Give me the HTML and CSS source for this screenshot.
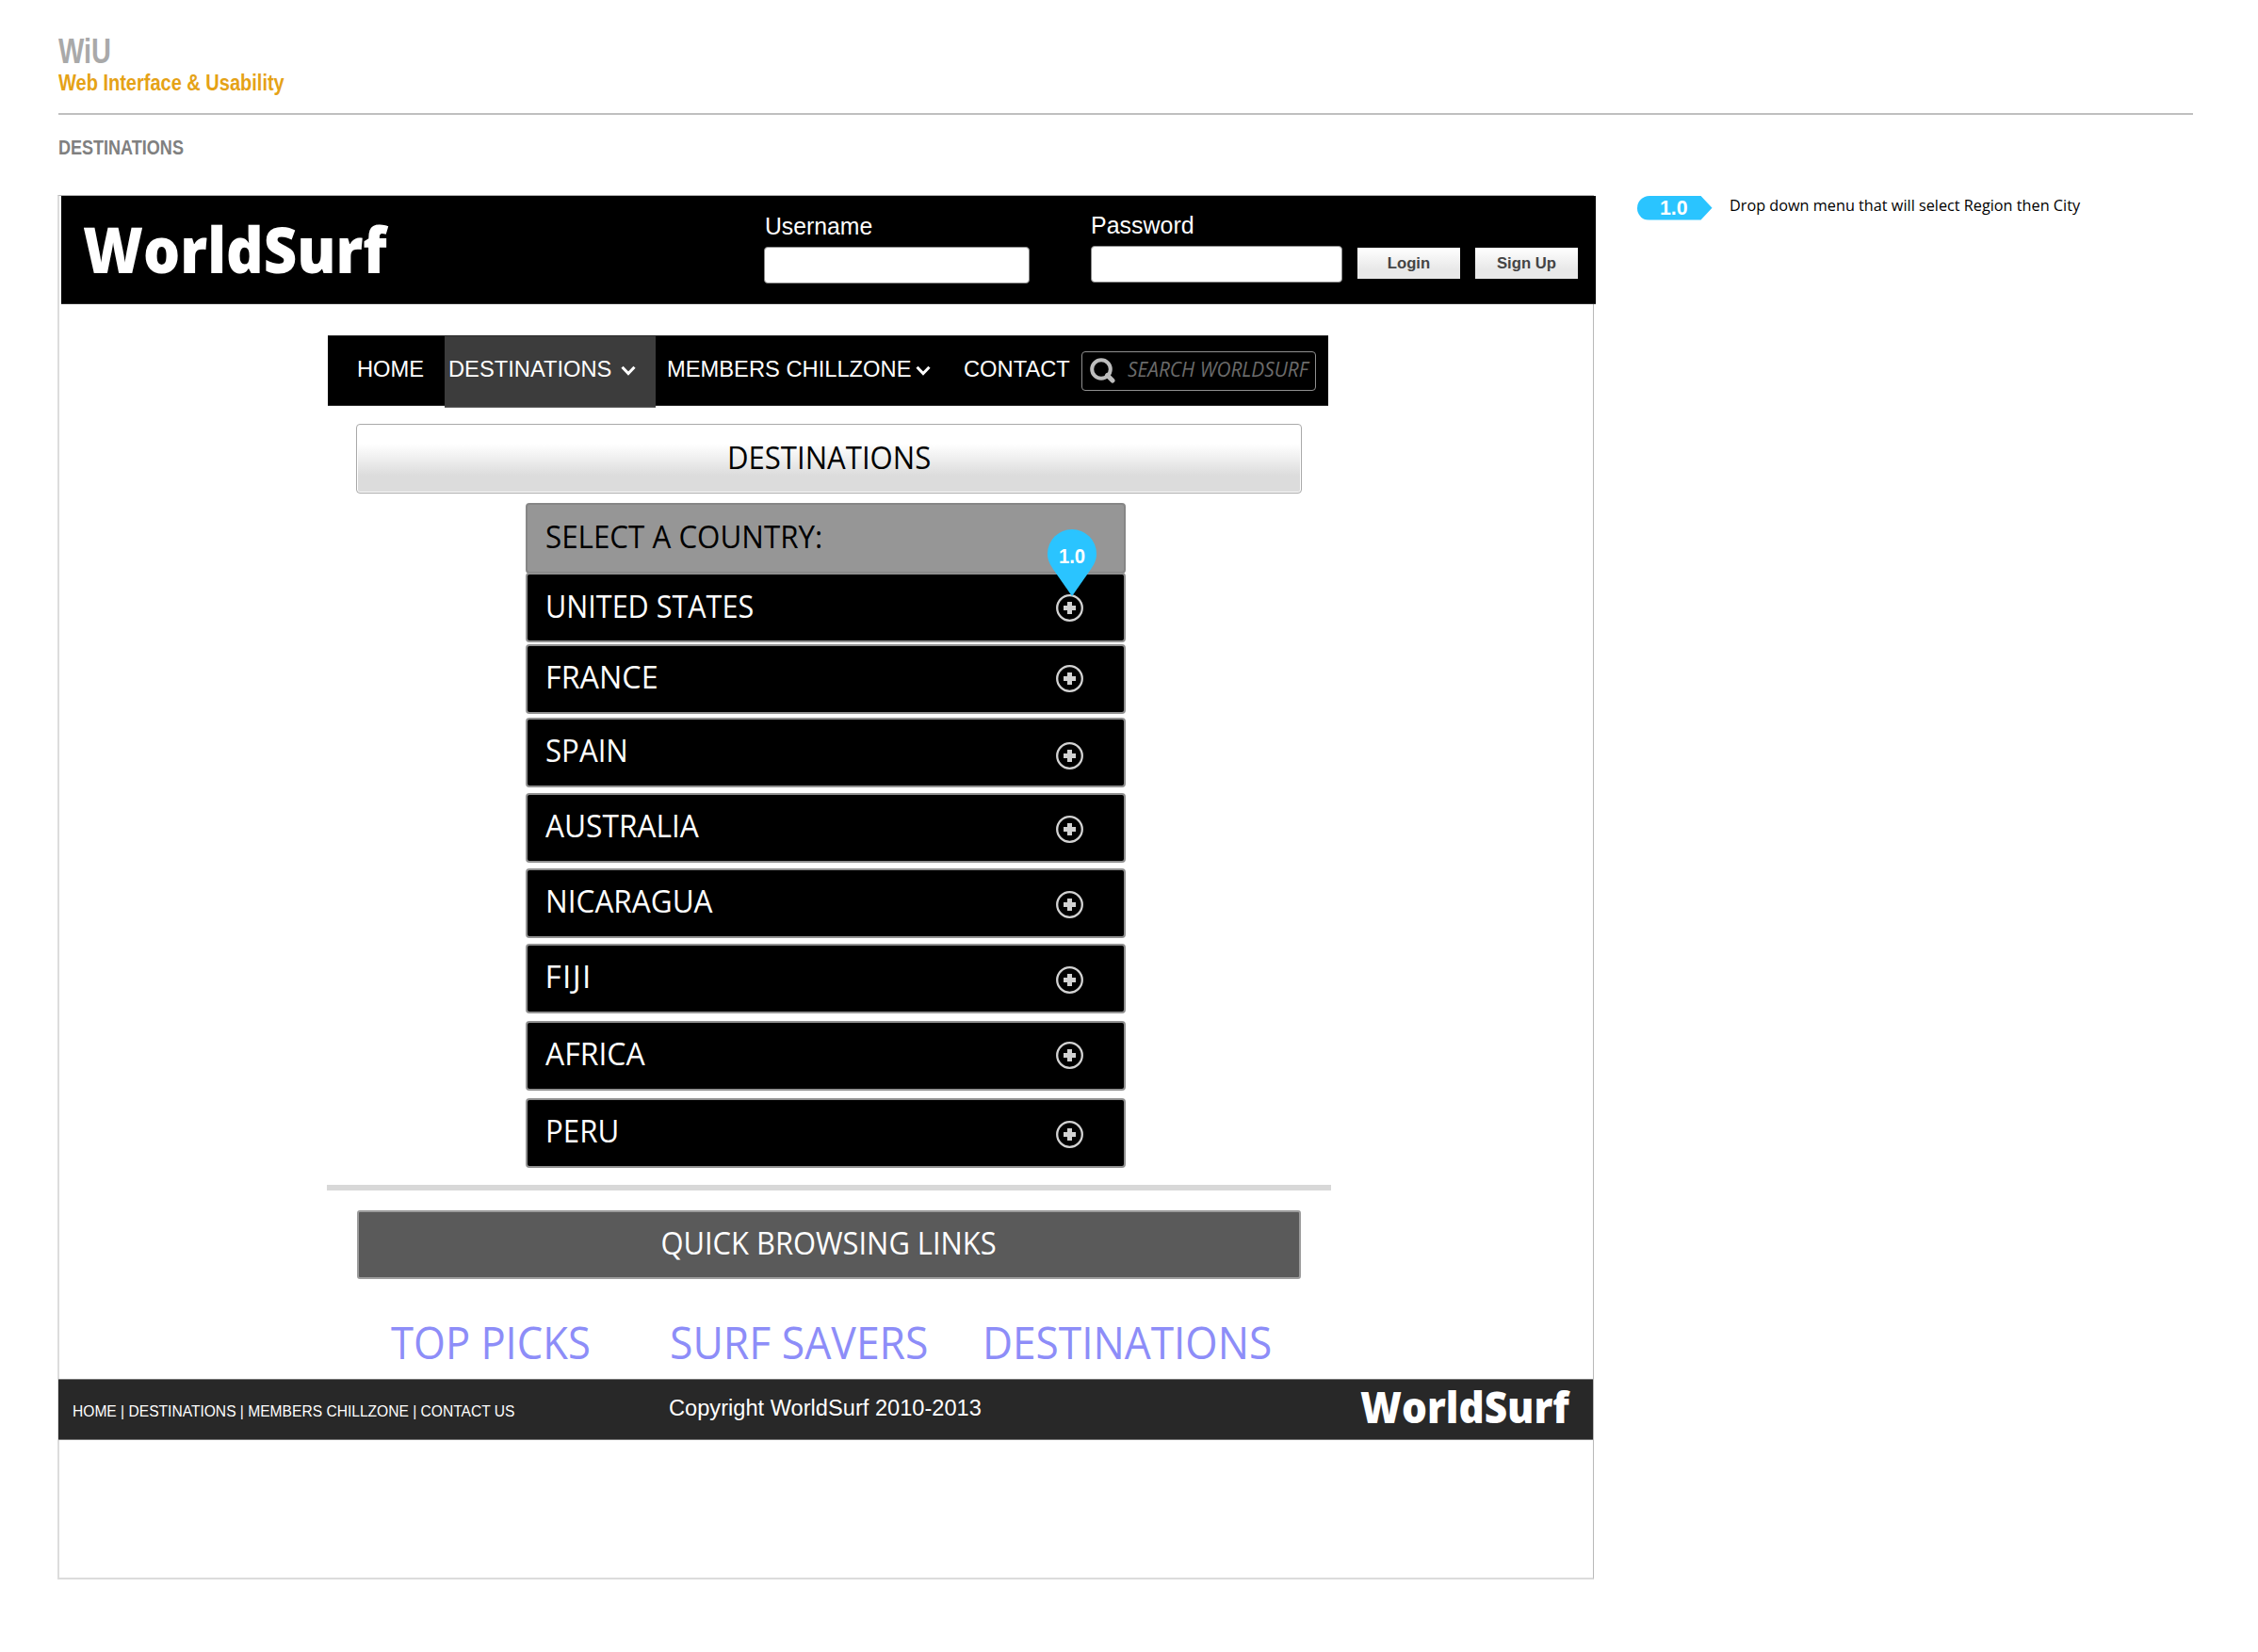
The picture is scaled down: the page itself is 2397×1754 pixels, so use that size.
FILE: index.html
```html
<!DOCTYPE html>
<html lang="en">
<head>
<meta charset="utf-8">
<title>WiU - Destinations</title>
<link rel="stylesheet" href="styles.css">
</head>
<body>
<svg width="0" height="0" class="defs">
  <symbol id="plus" viewBox="0 0 29 29">
    <circle cx="14.5" cy="14.5" r="13.3" fill="none" stroke="#d2d2d2" stroke-width="2.3"/>
    <path d="M12 8h5v4h4v5h-4v4h-5v-4h-4v-5h4z" fill="#d2d2d2"/>
  </symbol>
  <symbol id="chevron" viewBox="0 0 16 11">
    <path d="M1.5 1.8 8 8.6l6.500-6.800" fill="none" stroke="#fff" stroke-width="3"/>
  </symbol>
</svg>

<header class="doc-head">
  <div class="doc-brand"><span class="t">WiU</span></div>
  <div class="doc-sub"><span class="t">Web Interface &amp; Usability</span></div>
</header>
<div class="doc-title"><span class="t">DESTINATIONS</span></div>

<div class="board">
  <main class="frame">
    <div class="topbar">
      <div class="logo"><span class="t">WorldSurf</span></div>
      <label class="field user"><span class="t">Username</span><span class="input"></span></label>
      <label class="field pass"><span class="t">Password</span><span class="input"></span></label>
      <div class="buttons">
        <span class="btn">Login</span>
        <span class="btn">Sign Up</span>
      </div>
    </div>

    <nav class="nav">
      <a class="item home"><span class="t">HOME</span></a>
      <a class="item active"><span class="t">DESTINATIONS</span><svg class="chev"><use href="#chevron"/></svg></a>
      <a class="item members"><span class="t">MEMBERS CHILLZONE</span><svg class="chev"><use href="#chevron"/></svg></a>
      <a class="item contact"><span class="t">CONTACT</span></a>
      <div class="search">
        <svg class="glass" viewBox="0 0 27 27"><circle cx="12" cy="12" r="9.800" fill="none" stroke="#bdbdbd" stroke-width="4"/><path d="M18.500 18.500 24 24" stroke="#bdbdbd" stroke-width="5" stroke-linecap="round"/></svg>
        <span class="t">SEARCH WORLDSURF</span>
      </div>
    </nav>

    <h1 class="title"><span class="t">DESTINATIONS</span></h1>

    <div class="accordion">
      <div class="row select"><span class="t">SELECT A COUNTRY:</span></div>
      <div class="row us"><span class="t">UNITED STATES</span><svg class="plus"><use href="#plus"/></svg></div>
      <div class="row france"><span class="t">FRANCE</span><svg class="plus"><use href="#plus"/></svg></div>
      <div class="row spain"><span class="t">SPAIN</span><svg class="plus"><use href="#plus"/></svg></div>
      <div class="row australia"><span class="t">AUSTRALIA</span><svg class="plus"><use href="#plus"/></svg></div>
      <div class="row nicaragua"><span class="t">NICARAGUA</span><svg class="plus"><use href="#plus"/></svg></div>
      <div class="row fiji"><span class="t">FIJI</span><svg class="plus"><use href="#plus"/></svg></div>
      <div class="row africa"><span class="t">AFRICA</span><svg class="plus"><use href="#plus"/></svg></div>
      <div class="row peru"><span class="t">PERU</span><svg class="plus"><use href="#plus"/></svg></div>
      <div class="pin">
        <svg viewBox="0 0 52 71"><path d="M26 71 7.500 44.500C3 38 0 33 0 26a26 26 0 0 1 52 0c0 7-3 12-7.500 18.500z" fill="#2ac4ff"/></svg>
        <span class="pin-label">1.0</span>
      </div>
    </div>

    <div class="divider"></div>
    <div class="quick"><span class="t">QUICK BROWSING LINKS</span></div>
    <div class="links">
      <a class="t picks">TOP PICKS</a>
      <a class="t savers">SURF SAVERS</a>
      <a class="t dests">DESTINATIONS</a>
    </div>

    <footer class="footer">
      <div class="foot-nav"><span class="t">HOME | DESTINATIONS | MEMBERS CHILLZONE | CONTACT US</span></div>
      <div class="copy"><span class="t">Copyright WorldSurf 2010-2013</span></div>
      <div class="foot-logo"><span class="t">WorldSurf</span></div>
    </footer>
  </main>

  <aside class="notes">
    <span class="tag">1.0</span>
    <span class="note"><span class="t">Drop down menu that will select Region then City</span></span>
  </aside>
</div>
</body>
</html>
```
FILE: styles.css
```css
* { box-sizing: border-box; }
body {
  margin: 0;
  width: 2397px;
  height: 1754px;
  background: #fff;
  font-family: "Liberation Sans", Arial, sans-serif;
  overflow: hidden;
}
.defs { display: block; }

/* Labels are set slightly condensed; --sx is the horizontal scale */
.t {
  display: inline-block;
  white-space: nowrap;
  transform: scaleX(var(--sx, 1));
  transform-origin: 0 50%;
}

/* Document heading */
.doc-head {
  margin-left: 61.5px;
  width: 2266.500px;
  height: 122px;
  padding-top: 41px;
  border-bottom: 2px solid #bfbfbf;
  font-weight: bold;
}
.doc-brand { --sx: .781; font-size: 37px; line-height: 28px; height: 28px; color: #a9a9a9; }
.doc-sub { --sx: .827; font-size: 24.2px; line-height: 38px; height: 38px; color: #e5a216; }
.doc-title {
  --sx: .791;
  margin-left: 61.5px;
  height: 85px;
  line-height: 69px;
  font-size: 22.8px;
  font-weight: bold;
  color: #808080;
}

.board { display: flex; align-items: flex-start; }
.frame {
  margin-left: 61px;
  width: 1631px;
  height: 1470px;
  border: solid #dcdcdc;
  border-width: 1px 1px 2px 2px;
  border-top-color: #b4b4b4;
  border-right-color: #b9b9b9;
}

/* Top bar */
.topbar {
  display: flex;
  margin-left: 1.500px;
  width: 1629px;
  height: 115px;
  padding-left: 23.500px;
  background: #000;
  border-bottom: 1px solid #2b2b2b;
  color: #fff;
}
.logo {
  --sx: .922;
  width: 723px;
  font: 800 66.8px/114px "Open Sans", sans-serif;
}
.field { font-size: 25.6px; line-height: 28px; }
.field .t { display: block; margin-bottom: 8px; }
.input {
  display: block;
  height: 39px;
  background: #fff;
  border: 1px solid #8a8a8a;
  border-radius: 4px;
}
.user { width: 282px; padding-top: 18px; }
.user .t { --sx: .968; padding-left: 1px; }
.pass { width: 267.500px; margin-left: 64.500px; padding-top: 17px; }
.pass .t { --sx: .975; }
.buttons { display: flex; gap: 16px; margin: 55px 0 0 16px; }
.btn {
  width: 109px;
  height: 33px;
  background: linear-gradient(#fff, #e8e8e8 70%);
  color: #444;
  font-size: 16.7px;
  font-weight: bold;
  line-height: 33px;
  text-align: center;
}

/* Navigation */
.nav {
  display: flex;
  margin: 33px 0 0 285px;
  width: 1062px;
  height: 75px;
  background: #000;
  border: 1px solid #2b2b2b;
  border-width: 1px 0;
  color: #fff;
}
.item { --sx: .98; display: flex; height: 73px; font-size: 24.2px; line-height: 70px; }
.home { width: 124px; padding-left: 31px; }
.active {
  width: 224px;
  height: 76px;
  padding-left: 4px;
  background: #3c3c3c;
  border-bottom: 1px solid #6a6a6a;
}
.active .t { width: 183px; }
.members { padding-left: 12px; }
.members .t { width: 263.500px; }
.contact { width: 160.500px; padding-left: 35px; }
.chev { width: 16px; height: 11px; margin-top: 31px; }
.search {
  --sx: .934;
  display: flex;
  width: 249px;
  height: 42px;
  margin-top: 16px;
  padding-left: 8px;
  border: 1px solid #8f8f8f;
  border-radius: 4px;
  color: #6b6b6b;
  font: italic 22.3px/35px "Open Sans", sans-serif;
}
.glass { flex: none; width: 27px; height: 27px; margin: 6px 13px 0 0; }

/* Page title */
.title {
  --sx: .932;
  margin: 19px 0 0 315px;
  width: 1004px;
  height: 74px;
  border: 1px solid #a9a9a9;
  border-radius: 4px;
  box-shadow: inset 0 0 0 1px #fff;
  background: linear-gradient(#fff 28%, #dcdcdc 75%);
  font: 33.4px/68px "Open Sans", sans-serif;
  text-align: center;
}
.title .t, .quick .t { transform-origin: 50% 50%; }

/* Country accordion */
.accordion {
  position: relative;
  margin: 10px 0 0 495px;
  width: 637px;
}
.row {
  display: flex;
  justify-content: space-between;
  height: 74px;
  padding: 0 43px 0 18.500px;
  background: #000;
  border: 2px solid #919191;
  border-radius: 4px;
  color: #fff;
  font: 33.4px/64px "Open Sans", sans-serif;
}
.plus { width: 29px; height: 29px; margin-top: 21.500px; }
.select { --sx: .938; height: 75px; background: #969696; border-color: #868686; color: #000; line-height: 66px; }
.us { --sx: .915; margin-top: -1px; line-height: 66px; }
.us .plus { margin-top: 20.500px; }
.france { --sx: .967; margin-top: 2px; line-height: 65px; }
.france .plus { margin-top: 20px; }
.spain { --sx: .935; margin-top: 4px; line-height: 65px; }
.spain .plus { margin-top: 24px; }
.australia { --sx: .948; margin-top: 6px; line-height: 65px; }
.nicaragua { --sx: .944; margin-top: 6px; line-height: 65px; }
.fiji { letter-spacing: 1.3px; margin-top: 6px; line-height: 65px; }
.africa { --sx: .957; margin-top: 8px; line-height: 65px; }
.africa .plus { margin-top: 20px; }
.peru { --sx: .935; margin-top: 8px; line-height: 65px; }
.pin { position: absolute; left: 554px; top: 28px; width: 52px; height: 71px; }
.pin svg { display: block; width: 52px; height: 71px; }
.pin-label {
  position: absolute;
  inset: 0 0 auto 0;
  color: #fff;
  font-size: 22.5px;
  font-weight: bold;
  line-height: 58px;
  text-align: center;
  transform: scaleX(.9);
}

/* Quick links */
.divider { margin: 18px 0 0 283.500px; width: 1066.500px; height: 6px; background: #d8d8d8; }
.quick {
  --sx: .925;
  margin: 21px 0 0 316px;
  width: 1002px;
  height: 73px;
  background: #5a5a5a;
  border: 2px solid #9c9c9c;
  border-radius: 3px;
  color: #fff;
  font: 33.4px/65px "Open Sans", sans-serif;
  text-align: center;
}
.links {
  display: grid;
  grid-template-columns: 296px 331.500px 310px;
  margin-left: 352px;
  height: 106px;
  padding-top: 28px;
  color: #8d8df8;
  font: 46.6px/79px "Open Sans", sans-serif;
}
.picks { --sx: .935; }
.savers { --sx: .955; }
.dests { --sx: .948; }

/* Footer */
.footer {
  display: flex;
  margin-left: -1.500px;
  width: 1629px;
  height: 65px;
  padding-left: 15.500px;
  background: #282828;
  border: 1px solid #777;
  border-width: 1px 0;
  color: #fff;
}
.foot-nav { --sx: .912; width: 633px; font-size: 17.1px; line-height: 67px; }
.copy { --sx: .977; width: 734px; font-size: 24.2px; line-height: 60px; }
.foot-logo { --sx: .922; font: 800 45.9px/57px "Open Sans", sans-serif; }

/* Annotations */
.notes { display: flex; margin-left: 46px; padding-top: 1px; }
.tag {
  width: 79.500px;
  height: 25.500px;
  padding-right: 2px;
  background: #2ac4ff;
  border-radius: 13px 0 0 13px;
  clip-path: polygon(0 0, 85% 0, 100% 50%, 85% 100%, 0 100%);
  color: #fff;
  font-size: 21.3px;
  font-weight: bold;
  line-height: 26px;
  text-align: center;
}
.note { --sx: .973; margin-left: 18.500px; font: 16.7px/20px "Open Sans", sans-serif; color: #000; }
```
